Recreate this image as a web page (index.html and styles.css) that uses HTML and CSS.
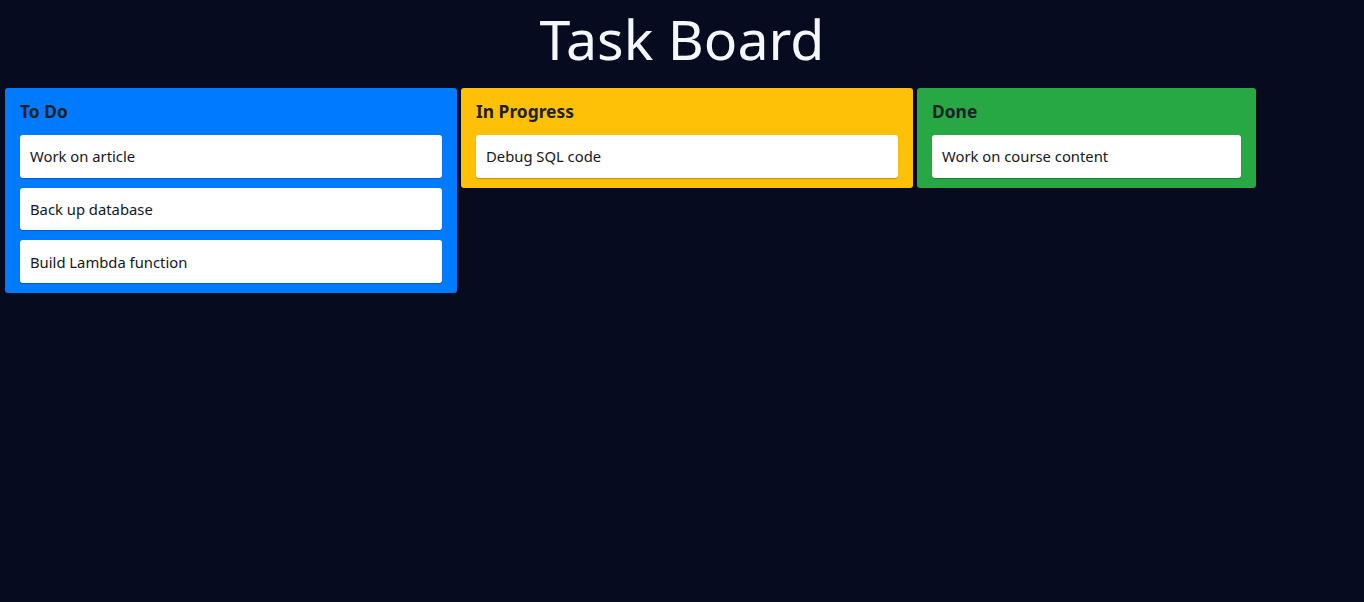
FILE: index.html
```html
<!DOCTYPE html>
<html lang="en">
<head>
<meta charset="utf-8">
<title>Task Board</title>
<link rel="stylesheet" href="styles.css">
</head>
<body>
<h1 class="title">Task Board</h1>
<main class="board">
  <section class="column todo">
    <h3 class="column-title">To Do</h3>
    <div class="card">Work on article</div>
    <div class="card">Back up database</div>
    <div class="card">Build Lambda function</div>
  </section>
  <section class="column progress">
    <h3 class="column-title">In Progress</h3>
    <div class="card">Debug SQL code</div>
  </section>
  <section class="column done">
    <h3 class="column-title">Done</h3>
    <div class="card">Work on course content</div>
  </section>
</main>
</body>
</html>
```

FILE: styles.css
```css
html, body {
  margin: 0;
  padding: 0;
  background: #070b1f;
  font-family: "Noto Sans", "DejaVu Sans", sans-serif;
}

.title {
  margin: 0;
  height: 88px;
  line-height: 78px;
  text-align: center;
  font-size: 55.5px;
  font-weight: 400;
  color: #f4f7fc;
}

.board {
  display: grid;
  grid-template-columns: 452px 452px 339px;
  gap: 4px;
  padding: 0 5px;
  align-items: start;
}

.column {
  border-radius: 3px;
  padding: 0 15px 10px;
  display: flex;
  flex-direction: column;
  gap: 10px;
}

.todo { background: #007bff; }
.progress { background: #ffc107; }
.done { background: #28a745; }

.column-title {
  margin: 0;
  height: 37px;
  padding-top: 10px;
  box-sizing: border-box;
  line-height: 27px;
  font-size: 17.4px;
  font-weight: 700;
  color: #1d2128;
}

.card {
  background: #fff;
  border-radius: 3px;
  height: 42.67px;
  box-sizing: border-box;
  padding: 0 10px;
  display: flex;
  align-items: center;
  font-size: 14.8px;
  color: #15171c;
  box-shadow: 0 1px 1px rgba(0, 0, 0, 0.25);
}
```
